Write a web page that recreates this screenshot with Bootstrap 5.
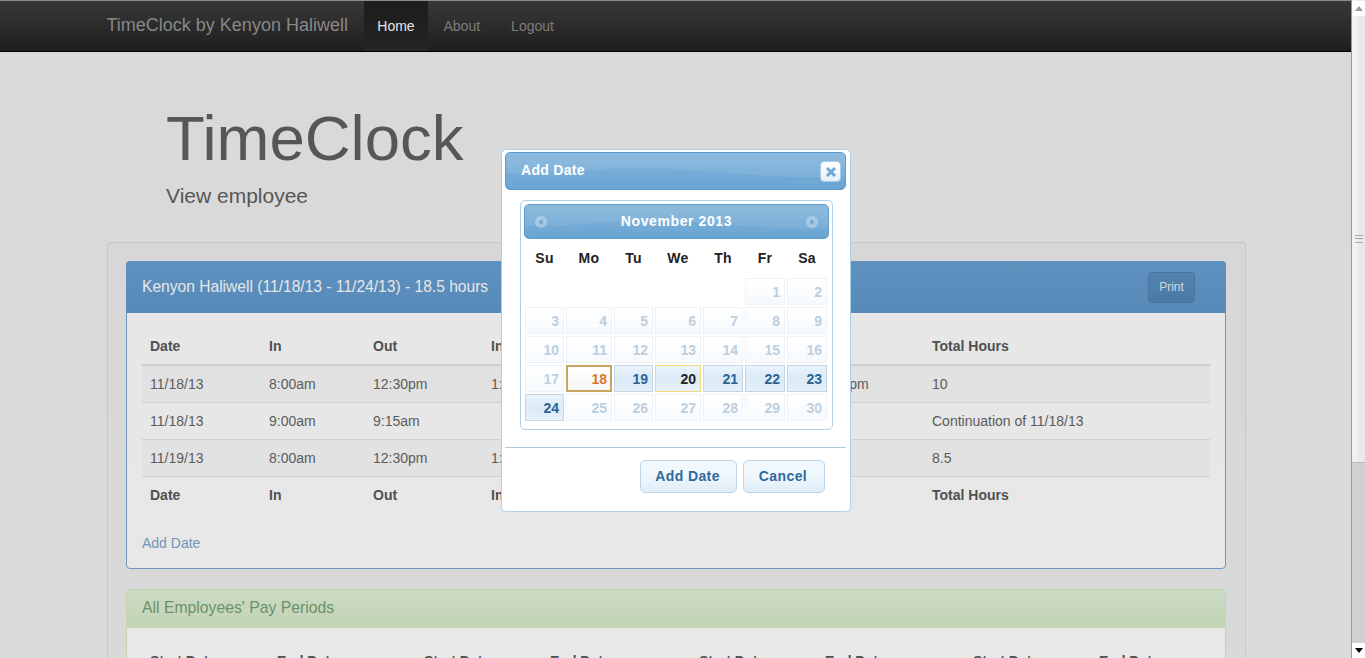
<!DOCTYPE html>
<html>
<head>
  <meta charset="UTF-8">
  <title>TimeClock - View employee</title>
  <link href="https://cdn.jsdelivr.net/npm/bootstrap@5.3.3/dist/css/bootstrap.min.css" rel="stylesheet">
  <style>
    html, body { height: 658px; overflow: hidden; }
    body {
      background-color: #f1f1f1;
      color: #666;
      font-family: "Liberation Sans", Arial, sans-serif;
      font-size: 14px;
    }
    .page-wrap { height: 658px; }
    .page-main { width: 1351px; height: 658px; overflow: hidden; position: relative; flex: none; }

    /* fake browser scrollbar */
    .scroll-side { width: 14px; height: 658px; background: linear-gradient(90deg, #f1f1f1 50%, #e9e9e9 50%); border-left: 1px solid #999; position: relative; flex: none; }
    .scroll-btn { height: 15px; background: #fff; display: flex; align-items: center; justify-content: center; position: absolute; left: 0; right: 0; }
    .scroll-up { top: 1px; }
    .scroll-down { bottom: 0; }
    .scroll-low { position: absolute; left: 0; right: 0; top: 462px; bottom: 15px; background: #d0d0d0; border-top: 1px solid #bbb; }
    .scroll-grip { position: absolute; left: 3px; top: 235px; width: 8px; height: 8px; border-top: 1px solid #aaa; border-bottom: 1px solid #aaa; }
    .scroll-grip::after { content: ""; display: block; height: 1px; margin-top: 2px; background: #aaa; }

    .top-bar {
      height: 52px;
      padding: 0;
      border-top: 1px solid #999;
      border-bottom: 1px solid #000;
      background: linear-gradient(#3e3e3e, #222);
    }
    .top-inner { width: 1170px; margin: 0 auto; padding-left: 16px; }
    .top-brand { color: #979797; font-size: 18px; width: 257px; padding-bottom: 1px; }
    .top-link { color: #8a8a8a; padding: 0 15px 0 16px; height: 50px; line-height: 50px; text-decoration: none; }
    .top-link.on { color: #fff; background: linear-gradient(#1f1f1f, #292929); width: 64px; padding: 0 0 0 1px; text-align: center; }

    .hero-box { padding: 51px 0 0 166px; height: 190px; }
    .hero-title { font-size: 63.5px; line-height: 70px; margin: 0 0 8px; font-weight: 400; color: #606060; }
    .hero-sub { font-size: 21px; line-height: 30px; margin: 0; color: #606060; }

    .well-box {
      width: 1139px;
      margin-left: 107px;
      padding: 18px 19px 0 18px;
      background: #eeeeee;
      border: 1px solid #dcdcdc;
      border-radius: 4px;
      height: 600px;
    }
    .tc-panel { background: #fff; border-radius: 4px; margin-bottom: 20px; }
    .tc-blue { border: 1px solid #7aa5d0; height: 308px; }
    .tc-green { border: 1px solid #d6e9c6; }
    .tc-head { padding: 0 30px 0 15px; }
    .tc-head-blue { height: 52px; margin: -1px -1px 0; padding-left: 16px; padding-right: 31px; font-size: 15.6px; color: #fff; background: linear-gradient(#6aa1d4, #5f98cb); border-radius: 4px 4px 0 0; }
    .tc-head-green { height: 38px; margin: 0; padding-bottom: 2px; font-size: 15.75px; color: #759f74; background: linear-gradient(#dff0d8, #d6e9c6); }
    .print-btn { color: #e3eef8; background: linear-gradient(#5c90c0, #5186b6); border: 1px solid #4f83b2; border-radius: 4px; font-size: 12px; padding: 6px 10px; height: 31px; width: 47px; line-height: 17px; text-align: center; }

    .tc-body { padding: 15px 15px 0; }
    .tc-table { table-layout: fixed; width: 1068px; margin: 0 0 19px; border-collapse: collapse; }
    .tc-table th, .tc-table td { padding: 8px; height: 37px; line-height: 20px; border-top: 1px solid #e4e4e4; color: #666; font-size: 14px; white-space: nowrap; vertical-align: middle; }
    .tc-table th { color: #585858; }
    .tc-table thead th { border-top: 0; border-bottom: 2px solid #e4e4e4; height: 37px; }
    .tc-table tbody tr:nth-child(odd) td { background: #f9f9f9; }
    .add-link { color: #7aa5d0; text-decoration: none; }
    .w-119 { width: 119px; }
    .w-104 { width: 104px; }
    .w-118 { width: 118px; }
    .w-110 { width: 110px; }
    .w-111 { width: 111px; }
    .w-127 { width: 127px; }
    .w-147 { width: 147px; }
    .w-126 { width: 126px; }
    .w-149 { width: 149px; }
    .w-148 { width: 148px; }

    /* overlay + dialog */
    .dim-layer { position: absolute; inset: 0; background: linear-gradient(rgba(0, 0, 0, .1), rgba(0, 0, 0, .09)); }
    .date-dialog {
      position: absolute;
      left: 501px;
      top: 149px;
      width: 350px;
      height: 363px;
      background: #fff;
      border: 1px solid #aed0ea;
      border-radius: 5px;
      padding: 2px 4px 0 3px;
      font-weight: 700;
    }
    .blue-bar {
      position: relative;
      overflow: hidden;
      background: linear-gradient(#85b6dc, #69a4d2);
      border: 1px solid #5d9bcd;
      border-radius: 5px;
      color: #fff;
    }
    .blue-bar svg.wave { position: absolute; inset: 0; width: 100%; height: 100%; }
    .blue-bar > span { position: relative; }
    .dlg-title { height: 38px; padding: 0 0 2px 15px; font-size: 14px; letter-spacing: .3px; }
    .dlg-close {
      position: absolute;
      right: 4px;
      top: 8px;
      width: 21px;
      height: 21px;
      padding: 0;
      background: linear-gradient(#fff, #e4f0f9);
      border: 1px solid #a6cbe8;
      border-radius: 4px;
    }
    .cal-box { width: 313px; height: 230px; margin: 10px 0 0 15px; border: 1px solid #aed0ea; border-radius: 5px; padding: 3px; }
    .cal-head { height: 35px; font-size: 14px; letter-spacing: .6px; padding: 0 10px; }
    .cal-days, .cal-cells { display: grid; grid-template-columns: 39px 46px 39px 46px 40px 40px 40px; column-gap: 2px; margin-left: 1px; }
    .cal-days { height: 39px; align-items: center; color: #222; text-align: center; letter-spacing: .3px; }
    .cal-cells { grid-auto-rows: 27px; row-gap: 2px; }
    .cal-cell {
      display: block;
      border: 1px solid #edf3f8;
      background: linear-gradient(#fff, #f6fafd);
      color: #bccfe0;
      text-align: right;
      padding-right: 4px;
      line-height: 26px;
      font-size: 14px;
      text-decoration: none;
    }
    .cal-cell.live { color: #2a6496; border-color: #c5d5e2; background: linear-gradient(#e9f4fd, #dbeaf7 50%, #e6f1fb); }
    .cal-cell.today-mark { color: #222; border-color: #f0d97a; }
    .cal-cell.picked { color: #d9782a; background: linear-gradient(#fff, #f5f5f5); border: 2px solid #c8a45f; padding-right: 3px; line-height: 24px; }
    .dlg-rule { height: 1px; margin-top: 17px; background: #aacbd8; }
    .dlg-actions { padding: 12px 21px 0 0; gap: 6px; }
    .dlg-btn {
      height: 33px;
      color: #2f6a9c;
      font-weight: 700;
      font-size: 14px;
      letter-spacing: .4px;
      background: linear-gradient(#f0f7fd 50%, #dfedf8);
      border: 1px solid #bdd4e6;
      border-radius: 5px;
      padding: 0 2px 0 0;
    }
    .btn-add { width: 97px; }
    .btn-cancel { width: 82px; }
  </style>
</head>
<body>
  <div class="page-wrap d-flex">
    <div class="page-main">
      <!-- Navbar -->
      <nav class="top-bar">
        <div class="top-inner d-flex align-items-center">
          <span class="top-brand">TimeClock by Kenyon Haliwell</span>
          <a class="top-link on" href="#">Home</a>
          <a class="top-link" href="#">About</a>
          <a class="top-link" href="#">Logout</a>
        </div>
      </nav>

      <!-- Jumbotron -->
      <div class="hero-box">
        <h1 class="hero-title">TimeClock</h1>
        <p class="hero-sub">View employee</p>
      </div>

      <div class="well-box">
        <div class="tc-panel tc-blue">
          <div class="tc-head tc-head-blue d-flex align-items-center justify-content-between">
            <span>Kenyon Haliwell (11/18/13 - 11/24/13) - 18.5 hours</span>
            <span class="print-btn">Print</span>
          </div>
          <div class="tc-body">
            <table class="tc-table">
              <colgroup>
                <col class="w-119"><col class="w-104"><col class="w-118">
                <col class="w-110"><col class="w-110"><col class="w-111"><col class="w-110">
                <col>
              </colgroup>
              <thead>
                <tr><th>Date</th><th>In</th><th>Out</th><th>In</th><th>Out</th><th>In</th><th>Out</th><th>Total Hours</th></tr>
              </thead>
              <tbody>
                <tr><td>11/18/13</td><td>8:00am</td><td>12:30pm</td><td>1:00pm</td><td>3:00pm</td><td>3:30pm</td><td>7:00pm</td><td>10</td></tr>
                <tr><td>11/18/13</td><td>9:00am</td><td>9:15am</td><td></td><td></td><td></td><td></td><td>Continuation of 11/18/13</td></tr>
                <tr><td>11/19/13</td><td>8:00am</td><td>12:30pm</td><td>1:00pm</td><td>5:00pm</td><td></td><td></td><td>8.5</td></tr>
              </tbody>
              <tfoot>
                <tr><th>Date</th><th>In</th><th>Out</th><th>In</th><th>Out</th><th>In</th><th>Out</th><th>Total Hours</th></tr>
              </tfoot>
            </table>
            <a class="add-link" href="#">Add Date</a>
          </div>
        </div>

        <div class="tc-panel tc-green">
          <div class="tc-head tc-head-green d-flex align-items-center">All Employees' Pay Periods</div>
          <div class="tc-body">
            <table class="tc-table">
              <colgroup>
                <col class="w-127"><col class="w-147"><col class="w-126"><col class="w-149">
                <col class="w-126"><col class="w-148"><col class="w-126">
                <col>
              </colgroup>
              <thead>
                <tr><th>Start Date</th><th>End Date</th><th>Start Date</th><th>End Date</th><th>Start Date</th><th>End Date</th><th>Start Date</th><th>End Date</th></tr>
              </thead>
            </table>
          </div>
        </div>
      </div>

      <div class="dim-layer"></div>

      <!-- Add date dialog -->
      <div class="date-dialog">
        <div class="blue-bar dlg-title d-flex align-items-center">
          <svg class="wave" viewBox="0 0 340 38" preserveAspectRatio="none"><path d="M0 0H340V24C280 30 220 18 150 16C90 14 40 24 0 22Z" fill="#fff" opacity=".08"/></svg>
          <span>Add Date</span>
          <button class="dlg-close d-flex align-items-center justify-content-center" type="button" aria-label="Close">
            <svg width="12" height="12" viewBox="0 0 12 12"><path d="M2 2L10 10M10 2L2 10" stroke="#6fa8d6" stroke-width="3" fill="none"/></svg>
          </button>
        </div>

        <div class="cal-box">
          <div class="blue-bar cal-head d-flex align-items-center justify-content-between">
            <svg class="wave" viewBox="0 0 305 35" preserveAspectRatio="none"><path d="M0 0H305V24C250 28 200 18 140 17C80 16 40 24 0 22Z" fill="#fff" opacity=".08"/></svg>
            <span class="d-flex"><svg width="12" height="12" viewBox="0 0 12 12"><circle cx="6" cy="6" r="6" fill="#fff" opacity=".3"/><path d="M7.5 3V9L3.5 6Z" fill="#6ba3d2"/></svg></span>
            <span>November 2013</span>
            <span class="d-flex"><svg width="12" height="12" viewBox="0 0 12 12"><circle cx="6" cy="6" r="6" fill="#fff" opacity=".3"/><path d="M4.5 3V9L8.5 6Z" fill="#6ba3d2"/></svg></span>
          </div>
          <div class="cal-days"><span>Su</span><span>Mo</span><span>Tu</span><span>We</span><span>Th</span><span>Fr</span><span>Sa</span></div>
          <div class="cal-cells" id="calCells"></div>
        </div>

        <div class="dlg-rule"></div>
        <div class="dlg-actions d-flex justify-content-end">
          <button class="dlg-btn btn-add" type="button">Add Date</button>
          <button class="dlg-btn btn-cancel" type="button">Cancel</button>
        </div>
      </div>
    </div>

    <!-- Scrollbar -->
    <div class="scroll-side">
      <div class="scroll-btn scroll-up"><svg width="8" height="5" viewBox="0 0 8 5"><path d="M4 0L8 5H0Z" fill="#999"/></svg></div>
      <div class="scroll-grip"></div>
      <div class="scroll-low"></div>
      <div class="scroll-btn scroll-down"><svg width="8" height="5" viewBox="0 0 8 5"><path d="M4 5L0 0H8Z" fill="#000"/></svg></div>
    </div>
  </div>

  <script>
    // build the november 2013 cells
    const holder = document.getElementById("calCells");
    for (let i = 0; i < 5; i++) {
      const s = document.createElement("span");
      holder.appendChild(s);
    }
    for (let d = 1; d <= 30; d++) {
      const c = document.createElement("a");
      c.className = "cal-cell";
      c.href = "#";
      if (d >= 19 && d <= 24) c.className += " live";
      if (d === 18) c.className += " picked";
      if (d === 20) c.className += " today-mark";
      c.textContent = d;
      holder.appendChild(c);
    }
  </script>
  <script src="https://cdn.jsdelivr.net/npm/bootstrap@5.3.3/dist/js/bootstrap.bundle.min.js"></script>
</body>
</html>
